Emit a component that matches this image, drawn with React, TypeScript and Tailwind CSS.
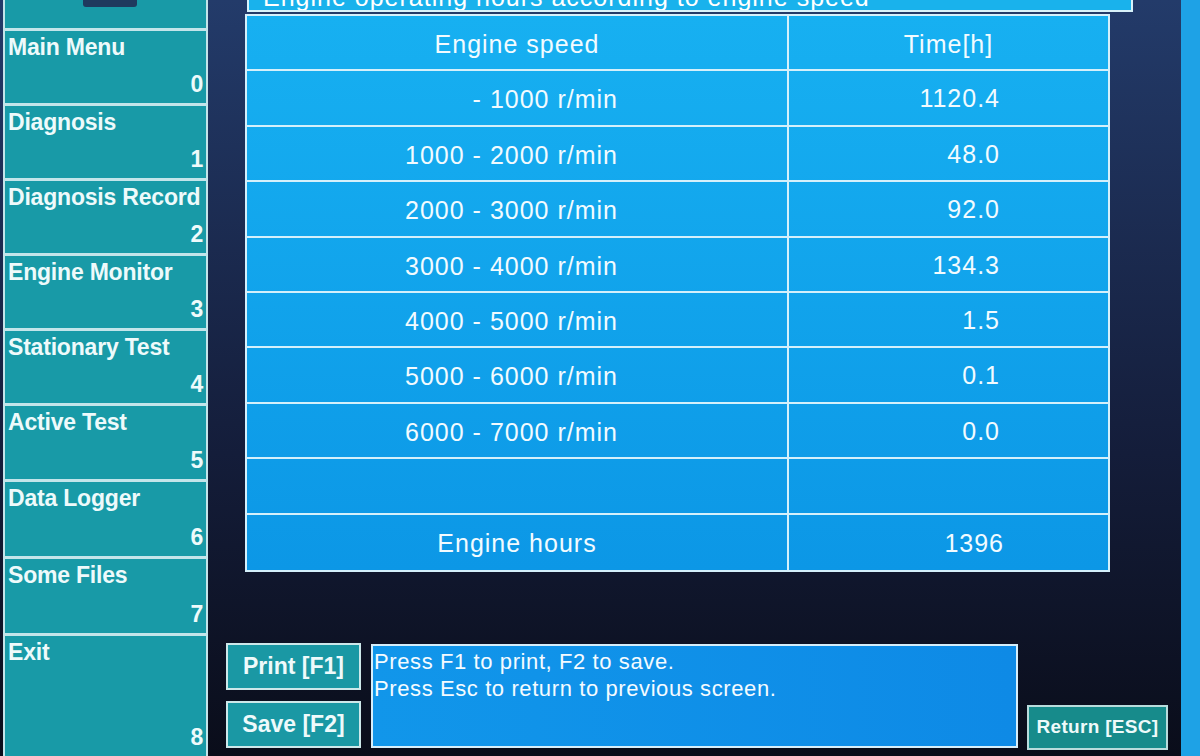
const menu = [
  { label: "Main Menu", key: "0", h: "h-[75px]" },
  { label: "Diagnosis", key: "1", h: "h-[75px]" },
  { label: "Diagnosis Record", key: "2", h: "h-[75px]" },
  { label: "Engine Monitor", key: "3", h: "h-[75px]" },
  { label: "Stationary Test", key: "4", h: "h-[75px]" },
  { label: "Active Test", key: "5", h: "h-[76px]" },
  { label: "Data Logger", key: "6", h: "h-[77px]" },
  { label: "Some Files", key: "7", h: "h-[77px]" },
  { label: "Exit", key: "8", h: "flex-1" },
];

const rows = [
  { speed: "- 1000 r/min", time: "1120.4" },
  { speed: "1000 - 2000 r/min", time: "48.0" },
  { speed: "2000 - 3000 r/min", time: "92.0" },
  { speed: "3000 - 4000 r/min", time: "134.3" },
  { speed: "4000 - 5000 r/min", time: "1.5" },
  { speed: "5000 - 6000 r/min", time: "0.1" },
  { speed: "6000 - 7000 r/min", time: "0.0" },
  { speed: "", time: "" },
];

function SideButton({ label, num, h }: { label: string; num: string; h: string }) {
  return (
    <div
      className={`${h} flex flex-col justify-between border-x-2 border-t-[3px] border-[#c3e5ea] bg-[#189aa7] px-[3px] pt-[4px] pb-[7px] text-[23px] leading-[24px] font-bold tracking-[-0.2px] text-[#eefafb]`}
    >
      <div>{label}</div>
      <div className="text-right">{num}</div>
    </div>
  );
}

export default function App() {
  return (
    <div className="flex h-[756px] w-[1200px] overflow-hidden bg-linear-to-b from-[#233b6a] via-[#141d3a] via-60% to-[#0a0d1a] font-['Liberation_Sans',Arial,sans-serif]">
      {/* side menu */}
      <div className="flex w-[208px] flex-col pl-[3px]">
        <div className="relative h-[28px] border-x-2 border-[#c3e5ea] bg-[#189aa7]">
          <div className="absolute left-[78px] top-0 h-[7px] w-[54px] rounded-b-[3px] bg-[#1f3a5e]" />
        </div>
        {menu.map((m) => (
          <SideButton key={m.key} label={m.label} num={m.key} h={m.h} />
        ))}
      </div>

      {/* main area */}
      <div className="flex flex-1 flex-col">
        <div className="ml-[39px] h-[12px] w-[886px] overflow-hidden border-x-2 border-b-2 border-[#d8f2fa] bg-[#19b2ec]">
          <div className="-mt-[17px] pl-[14px] text-[25px] leading-[28px] tracking-[1px] text-white">
            Engine operating hours according to engine speed
          </div>
        </div>

        <div className="ml-[37px] mt-[2px] grid h-[558px] w-[865px] grid-cols-[542px_1fr] grid-rows-10 border-2 border-[#d4f0fb] bg-linear-to-b from-[#17b0f1] to-[#0c97e6] text-[25px] tracking-[1px] text-[#f2fbff]">
          <div className="flex items-center justify-center border-r-2 border-b-2 border-[#d4f0fb] pt-[4px]">
            Engine speed
          </div>
          <div className="flex items-center justify-center border-b-2 border-[#d4f0fb] pt-[4px]">
            Time[h]
          </div>
          {rows.map((r, i) => (
            <div key={i} className="contents">
              <div className="flex items-center justify-center border-r-2 border-b-2 border-[#d4f0fb] pt-[4px] pr-[20px]">
                <span className="inline-block w-[222px] text-right">{r.speed}</span>
              </div>
              <div className="flex items-center justify-end border-b-2 border-[#d4f0fb] pr-[108px] pt-[2px]">
                {r.time}
              </div>
            </div>
          ))}
          <div className="flex items-center justify-center border-r-2 border-[#d4f0fb] pt-[2px]">
            Engine hours
          </div>
          <div className="flex items-center justify-end pr-[104px] pt-[2px]">1396</div>
        </div>

        {/* bottom bar */}
        <div className="mt-[71px] flex h-[107px]">
          <div className="ml-[18px] flex w-[135px] flex-col gap-[11px]">
            <div className="flex h-[47px] items-center justify-center border-2 border-[#cde8ea] bg-[#1a98a4] text-[23px] font-bold text-[#eefafb]">
              Print [F1]
            </div>
            <div className="flex h-[47px] items-center justify-center border-2 border-[#cde8ea] bg-[#1a98a4] text-[23px] font-bold text-[#eefafb]">
              Save [F2]
            </div>
          </div>
          <div className="ml-[10px] mt-[1px] h-[104px] w-[647px] border-2 border-[#d6eefa] bg-linear-to-r from-[#1196ea] to-[#0e8ae6] px-[1px] pt-[2px] text-[22px] leading-[27px] tracking-[0.6px] text-[#f4fbff]">
            <div>Press F1 to print, F2 to save.</div>
            <div>Press Esc to return to previous screen.</div>
          </div>
          <div className="ml-[9px] mt-[62px] flex h-[45px] w-[141px] items-center justify-center border-2 border-[#b9dcdc] bg-[#178b8b] text-[19px] font-bold tracking-[0.3px] text-[#eefafa]">
            Return [ESC]
          </div>
        </div>
      </div>

      {/* edge of the next panel */}
      <div className="w-[19px] bg-[#1ea2e6]" />
    </div>
  );
}
